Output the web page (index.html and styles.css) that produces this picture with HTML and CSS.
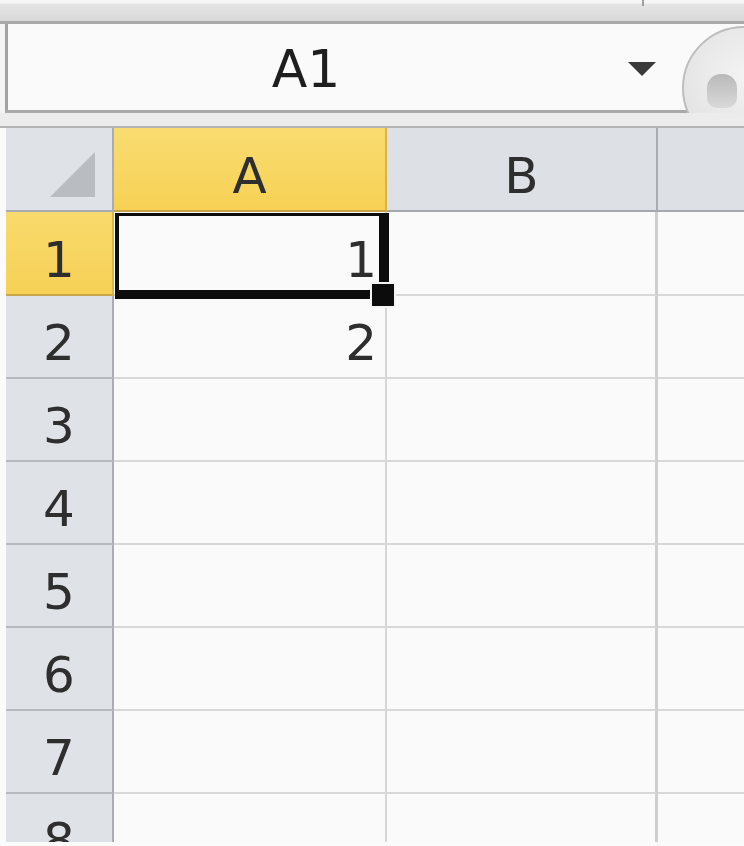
FILE: index.html
```html
<!DOCTYPE html>
<html lang="en">
<head>
<meta charset="utf-8">
<title>Excel A1</title>
<link rel="stylesheet" href="styles.css">
</head>
<body>
<div class="app">
  <div class="topstrip"><span class="tick"></span></div>
  <div class="namebar">
    <div class="namebox">
      <span class="ref">A1</span>
      <span class="arrow"></span>
    </div>
    <div class="fxbtn"><span class="blob"></span></div>
  </div>
  <div class="band"></div>
  <div class="sheet">
    <div class="grid">
      <div class="corner">
        <svg class="corner-tri" width="106" height="82" viewBox="0 0 106 82"><polygon points="89,24 89,69 44,69" fill="#b9bcc1"/></svg>
      </div>
      <div class="ch sel">A</div>
      <div class="ch">B</div>
      <div class="ch last"></div>

      <div class="rh sel">1</div>
      <div class="c colA">1</div>
      <div class="c colB"></div>
      <div class="c"></div>

      <div class="rh">2</div>
      <div class="c colA">2</div>
      <div class="c colB"></div>
      <div class="c"></div>

      <div class="rh">3</div>
      <div class="c colA"></div>
      <div class="c colB"></div>
      <div class="c"></div>

      <div class="rh">4</div>
      <div class="c colA"></div>
      <div class="c colB"></div>
      <div class="c"></div>

      <div class="rh">5</div>
      <div class="c colA"></div>
      <div class="c colB"></div>
      <div class="c"></div>

      <div class="rh">6</div>
      <div class="c colA"></div>
      <div class="c colB"></div>
      <div class="c"></div>

      <div class="rh">7</div>
      <div class="c colA"></div>
      <div class="c colB"></div>
      <div class="c"></div>

      <div class="rh">8</div>
      <div class="c colA"></div>
      <div class="c colB"></div>
      <div class="c"></div>
    </div>
    <div class="selection"></div>
    <div class="handle"></div>
  </div>
</div>
</body>
</html>
```

FILE: styles.css
```css
html, body {
  margin: 0;
  padding: 0;
  background: #fbfbfb;
}

.app {
  width: 744px;
  height: 846px;
  overflow: hidden;
  font-family: "DejaVu Sans", "Liberation Sans", sans-serif;
  color: #2e2e2e;
}

.topstrip {
  position: relative;
  height: 21px;
  background: linear-gradient(#f6f6f6 0, #f6f6f6 3px, #e4e4e4 4px, #d9d9d9 21px);
  border-bottom: 3px solid #a9a9a9;
}

.tick {
  position: absolute;
  left: 642px;
  top: 0;
  width: 2px;
  height: 6px;
  background: #a0a0a0;
}

.namebar {
  position: relative;
  height: 89px;
  padding-left: 5px;
  overflow: hidden;
  background: #f4f4f4;
}

.namebox {
  height: 86px;
  display: flex;
  align-items: center;
  background: #fafafa;
  border-left: 3px solid #a3a3a3;
  border-bottom: 3px solid #a9a9a9;
}

.ref {
  width: 596px;
  text-align: center;
  font-size: 52px;
  line-height: 1;
  color: #1e1e1e;
  padding-top: 4px;
}

.arrow {
  margin-left: 24px;
  width: 0;
  height: 0;
  border-left: 14px solid transparent;
  border-right: 14px solid transparent;
  border-top: 14px solid #3a3a3a;
  margin-top: 4px;
}

.fxbtn {
  position: absolute;
  left: 682px;
  top: 2px;
  width: 124px;
  height: 124px;
  box-sizing: border-box;
  border-radius: 50%;
  border: 2px solid #bdbdbd;
  background: radial-gradient(circle at 50% 40%, #f3f3f3 0, #e4e4e4 70%);
}

.blob {
  position: absolute;
  left: 23px;
  top: 46px;
  width: 30px;
  height: 34px;
  border-radius: 14px 14px 10px 10px;
  background: linear-gradient(#b9b9b9, #d9d9d9);
}

.band {
  height: 13px;
  background: #ececec;
  border-bottom: 2px solid #b4b4b4;
}

.sheet {
  position: relative;
  height: 714px;
  padding-left: 6px;
  overflow: hidden;
}

.grid {
  display: grid;
  grid-template-columns: 108px 273px 271px 1fr;
  grid-template-rows: 84px 84px 83px 83px 83px 83px 83px 83px 83px;
  height: 714px;
  overflow: hidden;
}

.grid > div {
  box-sizing: border-box;
  font-size: 50px;
  line-height: 1;
  padding-bottom: 9px;
  display: flex;
  align-items: flex-end;
}

.corner {
  background: #dfe2e7;
  border-right: 2px solid #a9adb3;
  border-bottom: 2px solid #a9adb3;
  padding-bottom: 0 !important;
}

.corner-tri {
  display: block;
}

.ch {
  justify-content: center;
  background: #dde1e6;
  border-right: 2px solid #a9adb3;
  border-bottom: 2px solid #a4a8ae;
}

.ch.last {
  border-right: none;
}

.ch.sel {
  background: linear-gradient(#f9dc71, #f6d154);
  border-right-color: #d9b24a;
  border-bottom-color: #c7a24a;
}

.rh {
  justify-content: center;
  background: #dfe2e7;
  border-right: 2px solid #a9adb3;
  border-bottom: 2px solid #b6bac0;
}

.rh.sel {
  background: linear-gradient(#f9da6c, #f6d156);
  border-right-color: #d9b24a;
  border-bottom-color: #c9a54c;
}

.c {
  justify-content: flex-end;
  padding-right: 8px;
  background: #fafafa;
  border-bottom: 2px solid #d8d8d8;
}

.colA {
  border-right: 2px solid #d6d6d6;
}

.colB {
  border-right: 3px solid #cfcfcf;
}

.selection {
  position: absolute;
  left: 115px;
  top: 85px;
  width: 274px;
  height: 86px;
  box-sizing: border-box;
  border-style: solid;
  border-color: #0c0c0c;
  border-width: 3px 10px 9px 4px;
}

.handle {
  position: absolute;
  left: 370px;
  top: 154px;
  width: 22px;
  height: 22px;
  background: #0c0c0c;
  border: 2px solid #f4f4f4;
}
```
